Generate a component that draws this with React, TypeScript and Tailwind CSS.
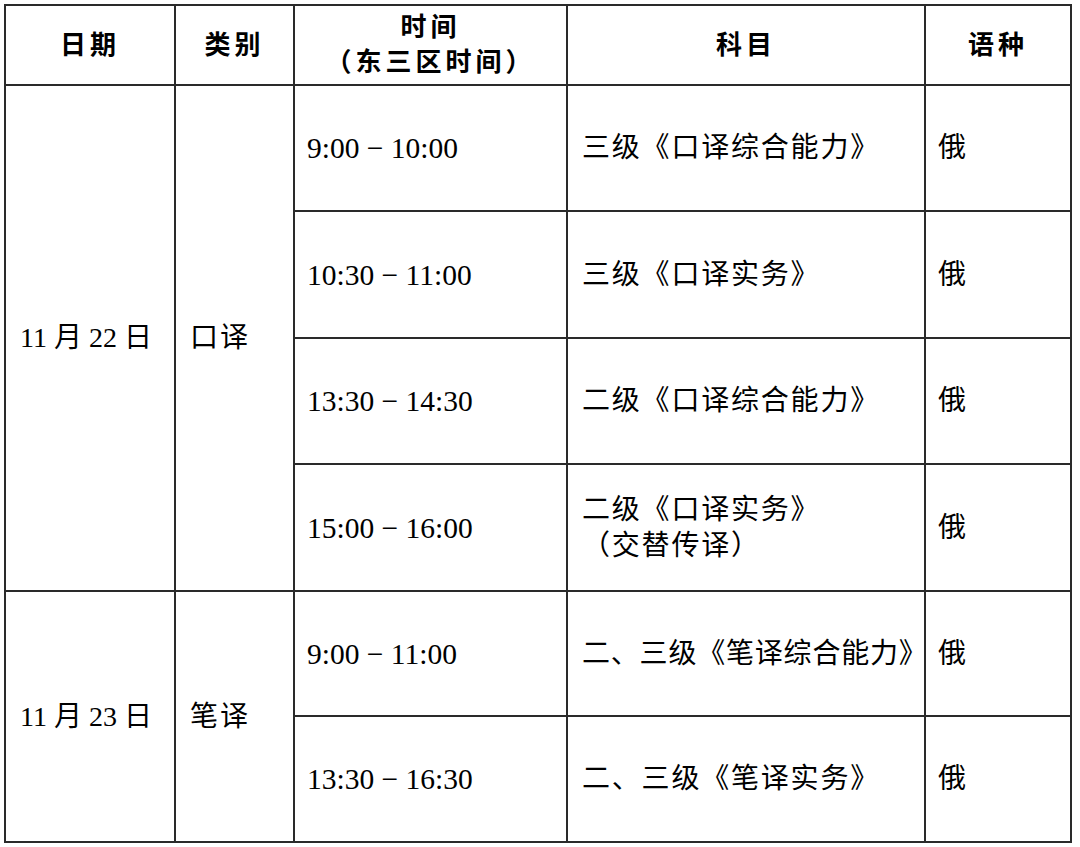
import React from 'react';

const font = "font-['Liberation_Serif','Noto_Sans_CJK_SC',serif]";

interface Row {
  date?: { text: string; span: number };
  kind?: { text: string; span: number };
  time: string;
  subject: string[];
  tight?: boolean;
  lang: string;
  h: number;
}

const rows: Row[] = [
  { date: { text: '11 月 22 日', span: 4 }, kind: { text: '口译', span: 4 }, time: '9:00 − 10:00', subject: ['三级《口译综合能力》'], lang: '俄', h: 126 },
  { time: '10:30 − 11:00', subject: ['三级《口译实务》'], lang: '俄', h: 127 },
  { time: '13:30 − 14:30', subject: ['二级《口译综合能力》'], lang: '俄', h: 126 },
  { time: '15:00 − 16:00', subject: ['二级《口译实务》', '（交替传译）'], lang: '俄', h: 127 },
  { date: { text: '11 月 23 日', span: 2 }, kind: { text: '笔译', span: 2 }, time: '9:00 − 11:00', subject: ['二、三级《笔译综合能力》'], tight: true, lang: '俄', h: 125 },
  { time: '13:30 − 16:30', subject: ['二、三级《笔译实务》'], lang: '俄', h: 126 },
];

const cell = 'border-2 border-[#2a2a2a] align-middle';

export default function App() {
  return (
    <div className={`w-[1080px] h-[847px] bg-white pt-[4px] pl-[4px] text-black ${font}`}>
      <table className="table-fixed border-collapse w-[1066px]">
        <colgroup>
          <col className="w-[170px]" />
          <col className="w-[119px]" />
          <col className="w-[273px]" />
          <col className="w-[358px]" />
          <col className="w-[146px]" />
        </colgroup>
        <thead>
          <tr className="h-[80px] text-[26px] font-semibold leading-[35px] text-center tracking-[4px]">
            <th className={cell}>日期</th>
            <th className={cell}>类别</th>
            <th className={cell}>
              <div>时间</div>
              <div>（东三区时间）</div>
            </th>
            <th className={cell}>科目</th>
            <th className={cell}>语种</th>
          </tr>
        </thead>
        <tbody className="text-[28px] leading-[36px]">
          {rows.map((r, i) => (
            <tr key={i} style={{ height: r.h }}>
              {r.date && (
                <td rowSpan={r.date.span} className={`${cell} pl-[14px] whitespace-nowrap`}>
                  {r.date.text}
                </td>
              )}
              {r.kind && (
                <td rowSpan={r.kind.span} className={`${cell} pl-[14px] tracking-[2px]`}>
                  {r.kind.text}
                </td>
              )}
              <td className={`${cell} pl-[12px] whitespace-nowrap text-[29.5px]`}>{r.time}</td>
              <td
                className={`${cell} pl-[14px] whitespace-nowrap ${r.tight ? 'tracking-[0.8px]' : 'tracking-[1.8px]'}`}
              >
                {r.subject.map((s) => (
                  <div key={s}>{s}</div>
                ))}
              </td>
              <td className={`${cell} pl-[12px]`}>{r.lang}</td>
            </tr>
          ))}
        </tbody>
      </table>
    </div>
  );
}
